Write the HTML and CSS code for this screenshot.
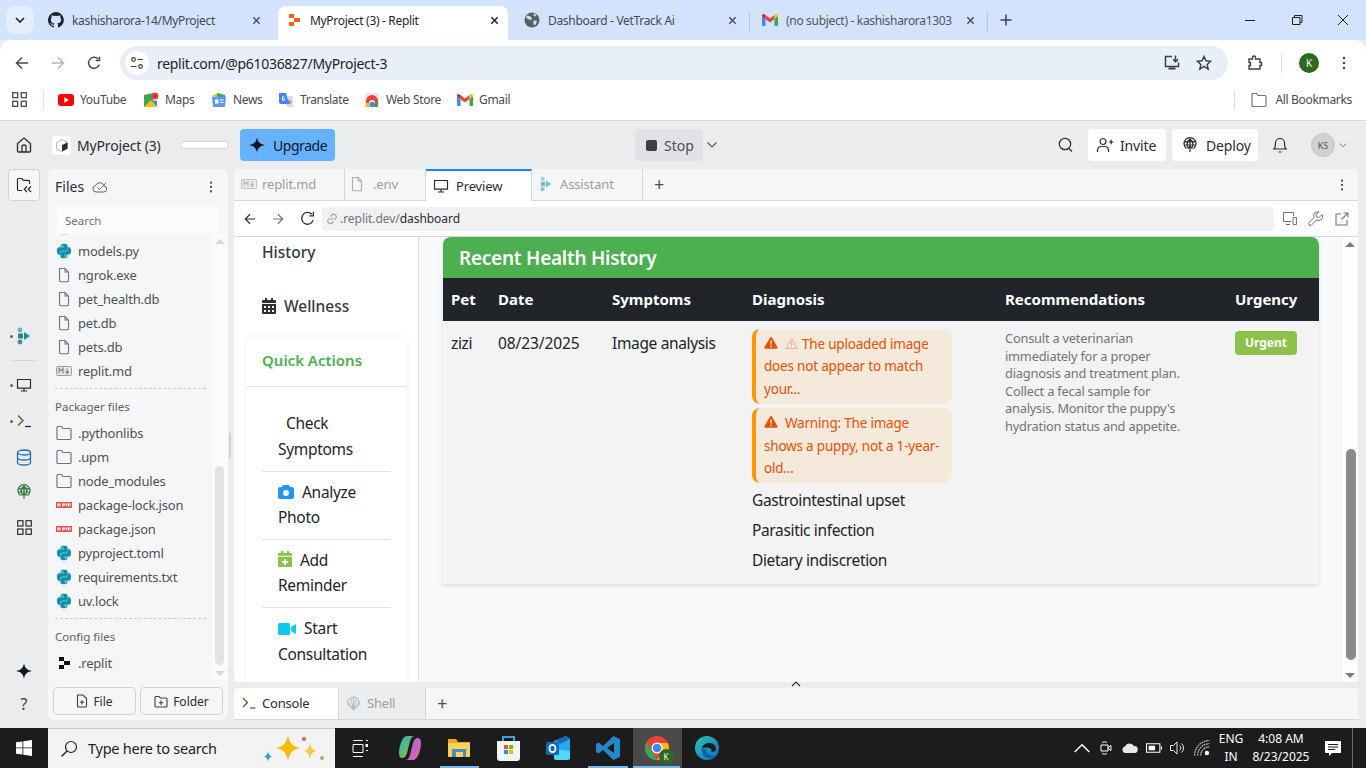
FILE: index.html
```html
<!DOCTYPE html>
<html lang="en">
<head>
    <meta charset="UTF-8">
    <title>MyProject (3) - Replit</title>
    <link rel="stylesheet" href="styles.css">
</head>
<body>
    <svg class="defs" width="0" height="0">
        <symbol id="py" viewBox="0 0 24 24">
            <path fill="#0f8fae" d="M11.900 1C6.600 1 7 3.300 7 3.300V5.700h5v.8H5S1.500 6.100 1.500 11.900s3.100 5.600 3.100 5.600h1.900v-2.700s-.1-3.100 3-3.100h5s2.900 0 2.900-2.800V4S18 1 11.900 1zM9.200 2.600a.9.9 0 1 1 0 1.800.9.9 0 0 1 0-1.800z"/>
            <path fill="#0f8fae" transform="rotate(180 12 12)" d="M11.900 1C6.600 1 7 3.300 7 3.300V5.700h5v.8H5S1.500 6.100 1.500 11.900s3.100 5.600 3.100 5.600h1.900v-2.700s-.1-3.100 3-3.100h5s2.900 0 2.900-2.800V4S18 1 11.900 1zM9.200 2.600a.9.9 0 1 1 0 1.800.9.9 0 0 1 0-1.800z"/>
        </symbol>
        <symbol id="file" viewBox="0 0 16 16">
            <path fill="none" stroke="#70757c" stroke-width="1.100" d="M3.500 1.500h5.500l3.500 3.500v8.500a1.200 1.200 0 0 1-1.200 1.200H4.700a1.200 1.200 0 0 1-1.200-1.200zM9 1.500V5h3.500"/>
        </symbol>
        <symbol id="folder" viewBox="0 0 16 16">
            <path fill="none" stroke="#70757c" stroke-width="1.200" d="M1 2.500a1 1 0 0 1 1-1h3.500l1.500 2h7a1 1 0 0 1 1 1v9a1 1 0 0 1-1 1H2a1 1 0 0 1-1-1z"/>
        </symbol>
        <symbol id="npm" viewBox="0 0 16 7">
            <rect width="16" height="6" y=".5" fill="#e2504f"/>
            <path fill="#fff" d="M1.500 2h3v3h-1V3h-.8v2H1.500zM6 2h3.200v2.200H7.200V5H6zm1.200 1v.4H8V3zM10 2h4.600v3h-1V3h-.7v2h-.9V3h-.8v2H10z"/>
        </symbol>
        <symbol id="md" viewBox="0 0 16 10">
            <rect x=".5" y=".5" width="15" height="9" rx="1" fill="#e8e9ea" stroke="#9a9ea3"/>
            <path fill="none" stroke="#85898e" stroke-width="1.200" d="M3 7.500v-5l2 2.400 2-2.400v5M11.200 2.500v4.500M9.500 5.500l1.700 2 1.700-2"/>
        </symbol>
        <symbol id="agent" viewBox="0 0 14 18">
            <circle cx="3" cy="3" r="2.400" fill="#5fb3c9"/>
            <circle cx="3" cy="15" r="2.400" fill="#3f8ea6"/>
            <rect x="1" y="6.500" width="5" height="5" fill="#2e7f99"/>
            <path d="M7 5l6 4-6 4z" fill="#0f8fae"/>
        </symbol>
        <symbol id="monitor" viewBox="0 0 16 16">
            <path fill="none" stroke="#2a2d33" stroke-width="1.200" d="M1.500 2.500h13v8.600h-13zM8 11.200v2.600M4.800 14h6.400"/>
        </symbol>
        <symbol id="globe" viewBox="0 0 16 16">
            <path fill="none" stroke="currentColor" stroke-width="1.200" d="M4.500 11.500a6 6 0 1 1 7 0M2 8h12M2.800 4.800h10.400M8 2v13M8 2c-4 3-3 7-1.500 9.500M8 2c4 3 3 7 1.500 9.500M5.600 11.600L8 9.200l2.400 2.400"/>
        </symbol>
        <symbol id="star4" viewBox="0 0 16 16">
            <path fill="currentColor" d="M8 0c.6 4.600 2.400 7 8 8-5.600 1-7.400 3.400-8 8-.6-4.600-2.400-7-8-8 5.600-1 7.400-3.400 8-8z"/>
        </symbol>
        <symbol id="close" viewBox="0 0 10 10">
            <path fill="none" stroke="currentColor" stroke-width="1.500" d="M1.500 1.500l7 7M8.500 1.500l-7 7"/>
        </symbol>
        <symbol id="warn" viewBox="0 0 16 16">
            <path fill="#e65100" d="M8 1.200c.5 0 .9.300 1.100.7l6.300 11c.4.700-.1 1.700-1 1.700H1.600c-.9 0-1.400-1-1-1.700l6.300-11c.2-.4.600-.7 1.100-.7z"/>
            <path fill="#f5e9dc" d="M7.100 5h1.800l-.3 5H7.400zM7.100 11h1.800v1.800H7.100z"/>
        </symbol>
        <symbol id="warn-line" viewBox="0 0 16 16">
            <path fill="none" stroke="#ecab84" stroke-width="1.200" d="M8 2l6.800 12H1.200zM8 6v4.500M8 11.500v1.500"/>
        </symbol>
        <symbol id="kebab" viewBox="0 0 4 16">
            <circle cx="2" cy="3" r="1.300" fill="currentColor"/>
            <circle cx="2" cy="8" r="1.300" fill="currentColor"/>
            <circle cx="2" cy="13" r="1.300" fill="currentColor"/>
        </symbol>
    </svg>

    <!-- browser -->
    <div class="tabstrip">
        <div class="tab-list-btn"><svg width="10" height="6" viewBox="0 0 10 6"><path d="M1 1l4 4 4-4" fill="none" stroke="#1f1f1f" stroke-width="1.600"/></svg></div>
        <div class="tab">
            <svg class="tab-icon" viewBox="0 0 16 16"><path fill="#1f2328" d="M8 0a8 8 0 0 0-2.500 15.600c.4.100.5-.2.500-.4v-1.400c-2.200.5-2.700-1-2.700-1-.4-.9-.9-1.200-.9-1.200-.7-.5.100-.5.100-.5.800.1 1.200.8 1.200.8.700 1.200 1.900.9 2.300.7.100-.5.300-.9.500-1.100-1.800-.2-3.600-.9-3.600-4 0-.9.300-1.600.8-2.100-.1-.2-.4-1 .1-2.100 0 0 .7-.2 2.200.8a7.600 7.600 0 0 1 4 0c1.500-1 2.200-.8 2.200-.8.400 1.100.2 1.900.1 2.100.5.600.8 1.300.8 2.100 0 3.100-1.900 3.700-3.700 3.900.3.300.6.800.6 1.500v2.200c0 .2.100.5.600.4A8 8 0 0 0 8 0z"/></svg>
            <span class="tab-title">kashisharora-14/MyProject</span>
            <svg class="tab-close" viewBox="0 0 10 10"><use href="#close"/></svg>
        </div>
        <div class="tab tab--active">
            <svg class="tab-icon" viewBox="0 0 16 16"><path fill="#f26207" d="M3 2h5v4H3zM8 6h6v4H8zM3 10h5v4H3z"/></svg>
            <span class="tab-title">MyProject (3) - Replit</span>
            <svg class="tab-close tab-close--dark" viewBox="0 0 10 10"><use href="#close"/></svg>
        </div>
        <div class="tab tab--sep">
            <svg class="tab-icon" viewBox="0 0 16 16"><circle cx="8" cy="8" r="7.500" fill="#5a6068"/><path fill="#d3e3fd" d="M3 3.500l3.500 1 1.500 2-1.500 1.500-1.500-.5-3-2zM9.500 8.500l3.500.5-1.500 4-2-.5zM10 1.500l2.500 1.500-1.500 1.500-1.500-1z"/></svg>
            <span class="tab-title">Dashboard - VetTrack Ai</span>
            <svg class="tab-close" viewBox="0 0 10 10"><use href="#close"/></svg>
        </div>
        <div class="tab tab--sep">
            <svg class="tab-icon" viewBox="0 0 16 12"><path fill="#4285f4" d="M0 2v9a1 1 0 0 0 1 1h2.500V5z"/><path fill="#34a853" d="M12.500 5v7H15a1 1 0 0 0 1-1V2z"/><path fill="#ea4335" d="M3.500 5L8 8.400 12.500 5V1L8 4.400 3.500 1z"/><path fill="#c5221f" d="M0 2l3.500 3V1L2 .2C1.100-.3 0 .5 0 2z"/><path fill="#fbbc04" d="M16 2l-3.500 3V1L14 .2c.9-.5 2 .3 2 1.800z"/></svg>
            <span class="tab-title tab-title--fade">(no subject) - kashisharora1303</span>
            <svg class="tab-close" viewBox="0 0 10 10"><use href="#close"/></svg>
        </div>
        <div class="tab-plus">
            <svg width="12" height="12" viewBox="0 0 12 12"><path d="M6 .5v11M.5 6h11" stroke="#3c4043" stroke-width="1.500"/></svg>
        </div>
        <div class="win-btns">
            <svg width="46" height="12" viewBox="0 0 46 12"><path d="M17 6.500h10" stroke="#1f1f1f"/></svg>
            <svg width="46" height="12" viewBox="0 0 46 12"><path d="M18.500 3.500h7.500v7h-7.500zM20.500 3.500v-2h7.500v7h-2" fill="none" stroke="#1f1f1f"/></svg>
            <svg width="46" height="12" viewBox="0 0 46 12"><path d="M18 1l10 10M28 1L18 11" stroke="#1f1f1f"/></svg>
        </div>
    </div>

    <div class="toolbar">
        <div class="nav-btn nav-btn--first"><svg width="14" height="14" viewBox="0 0 14 14"><path d="M13 7H2M7 1.500L1.500 7 7 12.500" fill="none" stroke="#474a4f" stroke-width="1.500"/></svg></div>
        <div class="nav-btn"><svg width="14" height="14" viewBox="0 0 14 14"><path d="M1 7h11M7 1.500L12.500 7 7 12.500" fill="none" stroke="#b4b6ba" stroke-width="1.500"/></svg></div>
        <div class="nav-btn"><svg width="14" height="14" viewBox="0 0 14 14"><path d="M12.300 8.500A5.500 5.500 0 1 1 11 3M12.500 .8v3.700H8.800" fill="none" stroke="#474a4f" stroke-width="1.500"/></svg></div>
        <div class="omnibox">
            <div class="site-btn"><svg width="14" height="14" viewBox="0 0 14 14"><g fill="none" stroke="#3c4043" stroke-width="1.200"><circle cx="3.500" cy="3.500" r="1.800"/><path d="M7.500 3.500h5.500M1 10.500h5.500"/><circle cx="10.500" cy="10.500" r="1.800"/></g></svg></div>
            <span class="omni-url">replit.com/@p61036827/MyProject-3</span>
            <svg class="omni-icon" width="18" height="18" viewBox="0 0 18 18"><path d="M9 2.500H2.500v10h13v-4M12.500 1.500v6M10 5.300l2.500 2.500L15 5.300" fill="none" stroke="#3c4043" stroke-width="1.500"/><path d="M5.500 14.500h7" stroke="#3c4043" stroke-width="2"/></svg>
            <svg class="omni-icon" width="16" height="16" viewBox="0 0 16 16"><path d="M8 1.500l2 4.300 4.700.5-3.500 3.200 1 4.600L8 11.300l-4.200 2.800 1-4.600L1.300 6.300 6 5.800z" fill="none" stroke="#3c4043" stroke-width="1.400"/></svg>
        </div>
        <svg class="ext-icon" width="16" height="16" viewBox="0 0 16 16"><path d="M2 4h3.500V2.500a1.500 1.500 0 0 1 3 0V4H13v3.500h1.500v3H13V14H2v-3.500h1.500v-3H2z" fill="none" stroke="#3c4043" stroke-width="1.400"/></svg>
        <div class="bar-sep"></div>
        <div class="chrome-avatar">K</div>
        <svg class="chrome-menu" width="4" height="16"><use href="#kebab"/></svg>
    </div>

    <div class="bookmarks">
        <svg class="apps" width="15" height="15" viewBox="0 0 15 15"><g fill="none" stroke="#474a4f" stroke-width="1.300"><rect x=".7" y=".7" width="5" height="5"/><rect x="9.300" y=".7" width="5" height="5"/><rect x=".7" y="9.300" width="5" height="5"/><rect x="9.300" y="9.300" width="5" height="5"/></g></svg>
        <div class="bm-sep"></div>
        <div class="bm bm--yt"><svg viewBox="0 0 16 12"><rect width="16" height="12" rx="3" fill="#f00"/><path d="M6.300 3.300L11 6l-4.700 2.700z" fill="#fff"/></svg>YouTube</div>
        <div class="bm bm--maps"><svg viewBox="0 0 16 16"><path fill="#34a853" d="M1 3l9-2v8L1 15z"/><path fill="#fbbc04" d="M1 15l7-7 6 7z"/><path fill="#4285f4" d="M8 8l6 7V9z"/><circle cx="12" cy="4" r="3.500" fill="#ea4335"/><circle cx="12" cy="4" r="1.200" fill="#a52714"/></svg>Maps</div>
        <div class="bm bm--news"><svg viewBox="0 0 16 16"><path fill="#fbbc04" d="M2 3l6-2 2 3H2z"/><path fill="#34a853" d="M6 1l8 2v2H6z"/><path fill="#5e97f6" d="M1 4.500h14l-1 10.500H2z"/><path fill="#fff" d="M4 7.500h3.500v4H4zM9 7.500h3.500v1H9zM9 10h3.500v1H9z"/></svg>News</div>
        <div class="bm bm--tr"><svg viewBox="0 0 16 16"><path fill="#dadce0" d="M7 4h8v11H9z"/><path fill="#8a8e94" d="M11 7l1 2 2 .2-1.500 1.300.5 2-2-1-2 1 .5-2-1.500-1.300 2-.2z"/><path fill="#4285f4" d="M1 1h7l3 11H3a2 2 0 0 1-2-2z"/><path fill="#fff" d="M4 4.500h2.500v1H5v2h1.200v-1H7v2H4z"/></svg>Translate</div>
        <div class="bm bm--ws"><svg viewBox="0 0 16 16"><path fill="#e8e8e8" d="M1 1h14v14H1z"/><path fill="#ea4335" d="M2 9a6 6 0 0 1 12 0v2h-3a3 3 0 0 0-6 0H2z"/><path fill="#fbbc04" d="M2 11h3a3 3 0 0 0 1 2l-1 2H2z"/><path fill="#34a853" d="M11 11h3v4H5z"/><circle cx="8" cy="12" r="2.300" fill="#4285f4"/></svg>Web Store</div>
        <div class="bm"><svg viewBox="0 0 16 12"><path fill="#4285f4" d="M0 2v9a1 1 0 0 0 1 1h2.500V5z"/><path fill="#34a853" d="M12.500 5v7H15a1 1 0 0 0 1-1V2z"/><path fill="#ea4335" d="M3.500 5L8 8.400 12.500 5V1L8 4.400 3.500 1z"/><path fill="#c5221f" d="M0 2l3.500 3V1L2 .2C1.100-.3 0 .5 0 2z"/><path fill="#fbbc04" d="M16 2l-3.500 3V1L14 .2c.9-.5 2 .3 2 1.800z"/></svg>Gmail</div>
        <div class="bm-sep bm-sep--right"></div>
        <div class="bm bm--all"><svg viewBox="0 0 16 16"><use href="#folder"/></svg>All Bookmarks</div>
    </div>

    <!-- replit -->
    <div class="ide">
        <header class="ide-top">
            <svg class="home" width="18" height="18" viewBox="0 0 18 18"><path d="M2.500 7.500L9 2l6.500 5.500V15a1 1 0 0 1-1 1h-11a1 1 0 0 1-1-1zM7 16v-5a2 2 0 0 1 4 0v5" fill="none" stroke="#2a2d33" stroke-width="1.300"/></svg>
            <div class="proj-icon"><svg width="12" height="13" viewBox="0 0 12 13"><path d="M6 .5l5.500 3v6L6 12.500l-5.500-3v-6z" fill="#fff" stroke="#bbb"/><path d="M6 6l5.500-2.500v6L6 12.500z" fill="#2a2d33"/></svg></div>
            <span class="proj-name">MyProject (3)</span>
            <div class="proj-pill"></div>
            <div class="upgrade"><svg width="16" height="16"><use href="#star4"/></svg>Upgrade</div>
            <div class="stop"><i class="stop-square"></i>Stop</div>
            <svg class="stop-caret" width="10" height="6" viewBox="0 0 10 6"><path d="M.5.500L5 5 9.500.500" fill="none" stroke="#53575e" stroke-width="1.100"/></svg>
            <svg class="search-ic" width="16" height="16" viewBox="0 0 16 16"><circle cx="7" cy="7" r="5.700" fill="none" stroke="#2a2d33" stroke-width="1.200"/><path d="M11 11.500l3 3" stroke="#2a2d33" stroke-width="1.200"/></svg>
            <div class="top-btn top-btn--invite"><svg width="18" height="16" viewBox="0 0 18 16"><g fill="none" stroke="#2a2d33" stroke-width="1.200"><circle cx="7" cy="4.500" r="3"/><path d="M1.500 15v-2a4 4 0 0 1 4-3.500h3a4 4 0 0 1 4 3.500v2M13 5h4.500M15.200 2.800v4.500"/></g></svg>Invite</div>
            <div class="top-btn top-btn--deploy"><svg width="16" height="16"><use href="#globe"/></svg>Deploy</div>
            <svg class="bell" width="16" height="18" viewBox="0 0 16 18"><path d="M2 13c1.500-1.500 1.500-3 1.500-6a4.500 4.500 0 0 1 9 0c0 3 0 4.500 1.500 6zM6.500 16h3" fill="none" stroke="#2a2d33" stroke-width="1.200"/></svg>
            <div class="user-avatar">KS</div>
            <svg class="user-caret" width="8" height="5" viewBox="0 0 8 5"><path d="M.5.500L4 4 7.500.500" fill="none" stroke="#8a8e94"/></svg>
        </header>

        <div class="ide-main">
            <nav class="rail">
                <div class="rail-files"><svg width="17" height="16" viewBox="0 0 17 16"><path d="M6 13.500H2.500a1 1 0 0 1-1-1v-10a1 1 0 0 1 1-1h3.300l1.500 1.800h5.200a1 1 0 0 1 1 1V7M11 9.500l-2.800 2.800 2.800 2.700M15 9.500l-2.800 2.800 2.800 2.700" fill="none" stroke="#2a2d33" stroke-width="1.200"/></svg></div>
                <div class="rail-item rail-item--first"><i class="rail-dot"></i><svg width="14" height="18"><use href="#agent"/></svg></div>
                <div class="rail-sep"></div>
                <div class="rail-item"><i class="rail-dot"></i><svg width="16" height="16"><use href="#monitor"/></svg></div>
                <div class="rail-item"><i class="rail-dot"></i><svg width="16" height="14" viewBox="0 0 16 14"><path d="M2 1.500L7 6.500 2 11.500" fill="none" stroke="#6b5320" stroke-width="1.300"/><path d="M9 12.500h6" stroke="#2a2d33" stroke-width="1.300"/></svg></div>
                <div class="rail-item"><svg width="16" height="17" viewBox="0 0 16 17"><g fill="none" stroke="#1f6fb2" stroke-width="1.300"><ellipse cx="8" cy="3.500" rx="6.500" ry="2.500"/><path d="M1.500 3.500v10c0 1.400 2.900 2.500 6.500 2.500s6.500-1.100 6.500-2.500v-10M1.500 8.500c0 1.400 2.900 2.500 6.500 2.500s6.500-1.100 6.500-2.500"/></g></svg></div>
                <div class="rail-item rail-item--deploy"><svg width="16" height="16"><use href="#globe"/></svg></div>
                <div class="rail-item rail-item--grid"><svg width="15" height="15" viewBox="0 0 15 15"><g fill="none" stroke="#2a2d33" stroke-width="1.200"><rect x=".7" y=".7" width="5.300" height="5.300"/><rect x="9" y=".7" width="5.300" height="5.300"/><rect x=".7" y="9" width="5.300" height="5.300"/><rect x="9" y="9" width="5.300" height="5.300"/></g></svg></div>
                <div class="rail-bottom">
                    <div class="rail-star"><svg width="16" height="16"><use href="#star4"/></svg></div>
                    <div class="rail-help">?</div>
                </div>
            </nav>

            <aside class="files">
                <div class="files-head">
                    <span class="files-title">Files</span>
                    <svg width="15" height="12" viewBox="0 0 15 12"><path d="M4 11a3.300 3.300 0 0 1-.5-6.500A4.500 4.500 0 0 1 12 5a3 3 0 0 1-.5 6zM5.500 6.500L7.500 8.500 14 2" fill="none" stroke="#5d6168"/></svg>
                    <svg class="files-kebab" width="4" height="14" viewBox="0 0 4 16"><use href="#kebab"/></svg>
                </div>
                <div class="files-search">Search</div>
                <div class="files-body">
                    <div class="tree">
                        <div class="row"><svg><use href="#py"/></svg></div>
                        <div class="row"><svg><use href="#py"/></svg>models.py</div>
                        <div class="row"><svg><use href="#file"/></svg>ngrok.exe</div>
                        <div class="row"><svg><use href="#file"/></svg>pet_health.db</div>
                        <div class="row"><svg><use href="#file"/></svg>pet.db</div>
                        <div class="row"><svg><use href="#file"/></svg>pets.db</div>
                        <div class="row"><svg><use href="#md"/></svg>replit.md</div>
                        <div class="tree-label">Packager files</div>
                        <div class="row"><svg><use href="#folder"/></svg>.pythonlibs</div>
                        <div class="row"><svg><use href="#folder"/></svg>.upm</div>
                        <div class="row"><svg><use href="#folder"/></svg>node_modules</div>
                        <div class="row"><svg><use href="#npm"/></svg>package-lock.json</div>
                        <div class="row"><svg><use href="#npm"/></svg>package.json</div>
                        <div class="row"><svg><use href="#py"/></svg>pyproject.toml</div>
                        <div class="row"><svg><use href="#py"/></svg>requirements.txt</div>
                        <div class="row"><svg><use href="#py"/></svg>uv.lock</div>
                        <div class="tree-label">Config files</div>
                        <div class="row"><svg viewBox="0 0 16 16"><path fill="#111" d="M3 2h5v4H3zM8 6h6v4H8zM3 10h5v4H3z"/></svg>.replit</div>
                    </div>
                    <div class="tree-scroll">
                        <i class="sb-up"></i>
                        <i class="sb-thumb"></i>
                        <i class="sb-down"></i>
                    </div>
                </div>
                <div class="files-actions">
                    <div class="file-btn"><svg width="12" height="14" viewBox="0 0 12 14"><path d="M1.500 1h5.500l3.500 3.500V12a1 1 0 0 1-1 1h-7a1 1 0 0 1-1-1zM6 6v4.500M3.800 8.200h4.400" fill="none" stroke="#3a3d43" stroke-width="1.100"/></svg>File</div>
                    <div class="file-btn"><svg width="14" height="13" viewBox="0 0 14 13"><path d="M1 2.500a1 1 0 0 1 1-1h3l1.300 1.500H12a1 1 0 0 1 1 1V11a1 1 0 0 1-1 1H2a1 1 0 0 1-1-1zM7 5.500v4.500M4.800 7.700h4.400" fill="none" stroke="#3a3d43" stroke-width="1.100"/></svg>Folder</div>
                </div>
            </aside>

            <div class="handle"></div>

            <div class="work">
                <section class="pane">
                    <div class="pane-tabs">
                        <div class="ptab ptab--md"><svg width="16" height="10"><use href="#md"/></svg>replit.md</div>
                        <div class="ptab ptab--env"><svg width="16" height="16"><use href="#file"/></svg>.env</div>
                        <div class="ptab ptab--active"><svg width="16" height="16"><use href="#monitor"/></svg>Preview</div>
                        <div class="ptab ptab--agent"><svg width="12" height="16"><use href="#agent"/></svg>Assistant</div>
                        <div class="ptab-plus">+</div>
                        <svg class="pane-kebab" width="4" height="14" viewBox="0 0 4 16"><use href="#kebab"/></svg>
                    </div>
                    <div class="addr">
                        <svg class="addr-btn" width="12" height="12" viewBox="0 0 14 14"><path d="M13 7H2M7 1.500L1.500 7 7 12.500" fill="none" stroke="#2a2d33" stroke-width="1.400"/></svg>
                        <svg class="addr-btn addr-btn--gap" width="12" height="12" viewBox="0 0 14 14"><path d="M1 7h11M7 1.500L12.500 7 7 12.500" fill="none" stroke="#70757c" stroke-width="1.400"/></svg>
                        <svg class="addr-btn addr-btn--gap" width="15" height="15" viewBox="0 0 14 14"><path d="M12.300 8.500A5.500 5.500 0 1 1 11 3M12.500 .8v3.700H8.800" fill="none" stroke="#2a2d33" stroke-width="1.200"/></svg>
                        <div class="addr-field">
                            <svg width="12" height="12" viewBox="0 0 12 12"><path d="M5 7l2-2M4.500 3.500l1.300-1.300a2.500 2.500 0 0 1 3.800 3.300L8.300 7M7.500 8.500L6.200 9.800a2.500 2.500 0 0 1-3.800-3.300L3.700 5" fill="none" stroke="#9a9ea3" stroke-width="1.100"/></svg>
                            <span class="addr-host">.replit.dev/</span><span class="addr-path">dashboard</span>
                        </div>
                        <svg class="addr-tool addr-tool--a" width="16" height="15" viewBox="0 0 16 15"><path d="M9 10.500H1.500v-9h10V5M4 13.500h4M11 6.500h3.500v7H11z" fill="none" stroke="#70757c"/></svg>
                        <svg class="addr-tool addr-tool--b" width="15" height="15" viewBox="0 0 15 15"><path d="M14 3.500l-3 3-2.500-.5-.5-2.500 3-2.500A4 4 0 0 0 6 6.500L1 11.500a1.500 1.500 0 0 0 2.500 2.500l5-5A4 4 0 0 0 14 3.500z" fill="none" stroke="#70757c"/></svg>
                        <svg class="addr-tool addr-tool--c" width="14" height="14" viewBox="0 0 14 14"><path d="M6 2H1v11h11V8M8.500 1H13v4.500M13 1L6.500 7.500" fill="none" stroke="#70757c" stroke-width="1.100"/></svg>
                    </div>

                    <div class="preview">
                        <div class="pv-side">
                            <div class="pv-link">History</div>
                            <div class="pv-link pv-link--well">
                                <svg width="14" height="16" viewBox="0 0 14 16"><path fill="#2b3035" d="M3 0h2v2h4V0h2v2h2a1 1 0 0 1 1 1v2H0V3a1 1 0 0 1 1-1h2zM0 6h14v9a1 1 0 0 1-1 1H1a1 1 0 0 1-1-1zm2 2v2h2V8zm4 0v2h2V8zm4 0v2h2V8zm-8 4v2h2v-2zm4 0v2h2v-2zm4 0v2h2v-2z"/></svg>
                                Wellness
                            </div>
                            <div class="qa">
                                <div class="qa-head">Quick Actions</div>
                                <div class="qa-body">
                                    <div class="qa-item"><span class="qa-blank"></span>Check Symptoms</div>
                                    <div class="qa-item"><svg class="qa-ic" width="16" height="14" viewBox="0 0 16 14"><path fill="#2196f3" d="M5 0h6l1.200 2H14a2 2 0 0 1 2 2v8a2 2 0 0 1-2 2H2a2 2 0 0 1-2-2V4a2 2 0 0 1 2-2h1.800z"/><circle cx="8" cy="8" r="3" fill="#fff"/></svg>Analyze Photo</div>
                                    <div class="qa-item"><svg class="qa-ic" width="14" height="16" viewBox="0 0 14 16"><path fill="#8bc34a" d="M3 0h2v2h4V0h2v2h2a1 1 0 0 1 1 1v12a1 1 0 0 1-1 1H1a1 1 0 0 1-1-1V3a1 1 0 0 1 1-1h2z"/><path fill="#fff" d="M0 4.800h14v1H0zM6 8h2v2h2v2H8v2H6v-2H4v-2h2z"/></svg>Add Reminder</div>
                                    <div class="qa-item"><svg class="qa-ic" width="18" height="12" viewBox="0 0 18 12"><rect width="12" height="12" rx="1.500" fill="#0dcaf0"/><path fill="#0dcaf0" d="M13 4l5-3v10l-5-3z"/></svg>Start Consultation</div>
                                </div>
                            </div>
                        </div>

                        <div class="pv-main">
                            <div class="card">
                                <div class="card-head">Recent Health History</div>
                                <table class="hist">
                                    <thead>
                                        <tr>
                                            <th class="col-pet">Pet</th>
                                            <th class="col-date">Date</th>
                                            <th class="col-sym">Symptoms</th>
                                            <th class="col-diag">Diagnosis</th>
                                            <th class="col-rec">Recommendations</th>
                                            <th class="col-urg">Urgency</th>
                                        </tr>
                                    </thead>
                                    <tbody>
                                        <tr>
                                            <td class="plain">zizi</td>
                                            <td class="plain plain--date">08/23/2025</td>
                                            <td class="plain">Image analysis</td>
                                            <td>
                                                <div class="alert"><svg class="alert-ic" width="14" height="14"><use href="#warn"/></svg><svg class="alert-ic alert-ic--line" width="13" height="13"><use href="#warn-line"/></svg>The uploaded image does not appear to match your...</div>
                                                <div class="alert"><svg class="alert-ic" width="14" height="14"><use href="#warn"/></svg>Warning: The image shows a puppy, not a 1-year-old...</div>
                                                <div class="diag diag--first">Gastrointestinal upset</div>
                                                <div class="diag">Parasitic infection</div>
                                                <div class="diag">Dietary indiscretion</div>
                                            </td>
                                            <td class="rec">Consult a veterinarian immediately for a proper diagnosis and treatment plan. Collect a fecal sample for analysis. Monitor the puppy's hydration status and appetite.</td>
                                            <td><span class="badge">Urgent</span></td>
                                        </tr>
                                    </tbody>
                                </table>
                            </div>
                        </div>

                        <div class="pv-scroll">
                            <i class="sb-up sb-up--dark"></i>
                            <i class="pv-thumb"></i>
                            <i class="sb-down sb-down--dark"></i>
                        </div>
                    </div>
                </section>

                <section class="console">
                    <div class="ctab ctab--active"><svg width="14" height="12" viewBox="0 0 14 12"><path d="M1 1l4.500 4.500L1 10" fill="none" stroke="#5d4a1e" stroke-width="1.200"/><path d="M8 11h5.500" stroke="#2a2d33" stroke-width="1.200"/></svg>Console</div>
                    <div class="ctab ctab--shell"><svg width="15" height="15" viewBox="0 0 15 15"><path d="M7.500 14L2 9a6 6 0 0 1 5.500-8A6 6 0 0 1 13 9zM7.500 14V1M7.500 14L4.500 2M7.500 14l3-12M7.500 14L2 6M7.500 14l5.500-8" fill="none" stroke="#a9bccd"/></svg>Shell</div>
                    <div class="ptab-plus">+</div>
                </section>
                <svg class="pane-caret" width="10" height="6" viewBox="0 0 10 6"><path d="M1 5l4-4 4 4" fill="none" stroke="#2a2d33" stroke-width="1.100"/></svg>
            </div>
        </div>
    </div>

    <!-- windows -->
    <footer class="taskbar">
        <div class="start"><svg width="16" height="16" viewBox="0 0 16 16"><path fill="#fff" d="M0 2.300l6.500-.9v6.100H0zM7.300 1.300L16 0v7.500H7.300zM0 8.300h6.500v6.200L0 13.700zM7.300 8.300H16V16l-8.700-1.200z"/></svg></div>
        <div class="tb-search">
            <svg width="18" height="18" viewBox="0 0 18 18"><circle cx="11" cy="7" r="5.500" fill="none" stroke="#222" stroke-width="1.200"/><path d="M7 11l-5.500 5.500" stroke="#222" stroke-width="1.400"/></svg>
            <span class="tb-search-text">Type here to search</span>
            <svg class="tb-sparkle" width="64" height="32" viewBox="0 0 64 32">
                <path fill="#ffb900" d="M26 2c1.500 8 3.500 11 12 13-8.500 2-10.500 5-12 13-1.500-8-3.500-11-12-13 8.500-2 10.500-5 12-13z"/>
                <path fill="#ffc83d" d="M48 10c.7 4 1.800 6.500 6 8-4.200 1.500-5.300 4-6 8-.7-4-1.800-6.500-6-8 4.200-1.500 5.300-4 6-8z"/>
                <path fill="#2aa0f5" d="M6 18c.5 3 1.200 4.500 4 5.500-2.800 1-3.500 2.500-4 5.500-.5-3-1.200-4.500-4-5.500 2.800-1 3.500-2.500 4-5.500z"/>
                <circle cx="42" cy="6" r="2" fill="#e8623c"/>
                <circle cx="60" cy="25" r="2" fill="#8bc34a"/>
            </svg>
        </div>
        <div class="tb-view"><svg width="16" height="17" viewBox="0 0 16 17"><path d="M1 .500h10M1 16.500h10M1 4.500h10v8H1zM14 .5h2M14 10.500h2" fill="none" stroke="#fff"/><path d="M13.500 4h3v3h-3z" fill="#fff"/></svg></div>
        <div class="tb-app">
            <svg width="22" height="26" viewBox="0 0 22 26"><defs><linearGradient id="cop" x1="0" y1="0" x2="1" y2="1"><stop offset="0" stop-color="#35a8f0"/><stop offset=".55" stop-color="#5fc05a"/><stop offset="1" stop-color="#f6c13c"/></linearGradient><linearGradient id="cop2" x1="0" y1="0" x2="1" y2="1"><stop offset="0" stop-color="#8a6df0"/><stop offset="1" stop-color="#f2609b"/></linearGradient></defs><path fill="url(#cop)" d="M8 1h8c-3 0-4 2-5 5L8 18c-.8 3-2.500 5-5 5-2 0-3-2-3-5 0-6 3-17 8-17z"/><path fill="url(#cop2)" d="M14 25H6c3 0 4-2 5-5l3-12c.8-3 2.500-5 5-5 2 0 3 2 3 5 0 6-3 17-8 17z"/></svg>
        </div>
        <div class="tb-app tb-app--open">
            <svg width="22" height="20" viewBox="0 0 22 20"><path fill="#e8a91e" d="M0 1h8l2 3h12v4H0z"/><path fill="#f9d25d" d="M0 5h22v13a1 1 0 0 1-1 1H1a1 1 0 0 1-1-1z"/><path fill="#2f87c9" d="M4 11h14v8h-3v-5H8v5H4z" opacity=".9"/></svg>
        </div>
        <div class="tb-app">
            <svg width="23" height="26" viewBox="0 0 23 26"><path fill="none" stroke="#2ca7e0" stroke-width="2" d="M6 7V2h11v5"/><path fill="#f5f5f5" d="M0 6h23v17a3 3 0 0 1-3 3H3a3 3 0 0 1-3-3z"/><path fill="#f25022" d="M7 10h4v4H7z"/><path fill="#7fba00" d="M12 10h4v4h-4z"/><path fill="#00a4ef" d="M7 15h4v4H7z"/><path fill="#ffb900" d="M12 15h4v4h-4z"/></svg>
        </div>
        <div class="tb-app">
            <svg width="24" height="24" viewBox="0 0 24 24"><path fill="#28a8ea" d="M8 5l12-5 4 3v12H8z"/><path fill="#0f6cbd" d="M10 4l10-4 4 3-10 5z"/><path fill="#50d9ff" d="M8 13l16 2v7a2 2 0 0 1-2 2H10a2 2 0 0 1-2-2z"/><rect y="6" width="13" height="13" rx="1.500" fill="#0f6cbd"/><ellipse cx="6.500" cy="12.500" rx="3" ry="3.700" fill="none" stroke="#fff" stroke-width="1.800"/></svg>
        </div>
        <div class="tb-app tb-app--open">
            <svg width="24" height="24" viewBox="0 0 24 24"><path fill="#2489ca" fill-rule="evenodd" d="M17.500 0L24 3.200v17.600L17.500 24 7 14l-4.500 3.500L0 16V8l2.500-1.500L7 10zM18 7l-7 5 7 5z"/></svg>
        </div>
        <div class="tb-app tb-app--active">
            <svg width="24" height="24" viewBox="0 0 24 24"><circle cx="12" cy="12" r="12" fill="#ea4335"/><path fill="#34a853" d="M12 24a12 12 0 0 1-10.400-18L12 24z"/><path fill="#fbbc04" d="M12 24l5.200-9L12 7h10.900A12 12 0 0 1 12 24z"/><circle cx="12" cy="12" r="5.500" fill="#fff"/><circle cx="12" cy="12" r="4.300" fill="#4285f4"/></svg>
            <span class="chrome-badge">K</span>
        </div>
        <div class="tb-app">
            <svg width="24" height="24" viewBox="0 0 24 24"><defs><linearGradient id="edge" x1="0" y1="0" x2="1" y2="1"><stop offset="0" stop-color="#2bc6b5"/><stop offset="1" stop-color="#0a6cc2"/></linearGradient></defs><circle cx="12" cy="12" r="12" fill="url(#edge)"/><path fill="#1c1c1c" d="M7 13c0-4 4-6 7-6 4 0 7 2 7 6 0 2-2 3-5 3 1-1 1-2 0-3-2-2-7-2-9 0z"/><path fill="#0a5fa8" d="M7 13c-1 5 3 9 8 9 4 0 6-2 7-3-3 1-8 1-10-2-1-1-1-2 0-3 0 0-3-1-5-1z"/></svg>
        </div>
        <div class="tray">
            <svg class="tray-ic" width="12" height="7" viewBox="0 0 12 7"><path d="M.500 6.500L6 1l5.500 5.500" fill="none" stroke="#fff" stroke-width="1.100"/></svg>
            <svg class="tray-ic" width="12" height="16" viewBox="0 0 12 16"><path d="M1 5h7v6H1zM8 7.500l3-2v5l-3-2zM2 2.500a5 5 0 0 1 5 0M2 13.500a5 5 0 0 0 5 0" fill="none" stroke="#fff"/></svg>
            <svg class="tray-ic" width="16" height="10" viewBox="0 0 16 10"><path fill="#e8e8e8" d="M3.500 10a3.300 3.300 0 0 1-.5-6.500A5 5 0 0 1 12 3a3.500 3.500 0 0 1 .5 7z"/></svg>
            <svg class="tray-ic" width="15" height="9" viewBox="0 0 15 9"><path d="M.500.500h12.500v8H.500z" fill="none" stroke="#fff"/><path d="M2.500 2.500h6v4h-6zM14 3h1v3h-1z" fill="#fff"/></svg>
            <svg class="tray-ic" width="16" height="14" viewBox="0 0 16 14"><path d="M.500 4.500h3L7 1v12L3.500 9.500h-3zM9.500 4.500a3 3 0 0 1 0 5M11.500 2.500a6 6 0 0 1 0 9" fill="none" stroke="#fff" stroke-width=".9"/></svg>
            <svg class="tray-ic" width="13" height="13" viewBox="0 0 13 13"><path d="M.500 12.500a12 12 0 0 1 12-12M3 12.500a9.500 9.500 0 0 1 9.500-9.500M5.500 12.500a7 7 0 0 1 7-7" fill="none" stroke="#c9c9c9" stroke-dasharray="1.400 .6"/><circle cx="10.500" cy="10.500" r="1.800" fill="#fff"/></svg>
            <div class="tray-lang">ENG<br>IN</div>
            <div class="tray-time">4:08 AM<br>8/23/2025</div>
            <div class="tray-note"><svg width="16" height="15" viewBox="0 0 16 15"><path fill="#fff" d="M0 0h16v12H7l-3 3v-3H0z"/><path d="M3 3.500h10M3 6h10M3 8.500h7" stroke="#1c1c1c"/></svg></div>
            <div class="tray-desk"></div>
        </div>
    </footer>
</body>
</html>
```

FILE: styles.css
```css
* {
    box-sizing: border-box;
}

html, body {
    margin: 0;
    padding: 0;
}

body {
    width: 1366px;
    height: 768px;
    overflow: hidden;
    font-family: "Noto Sans", "Liberation Sans", sans-serif;
    color: #212529;
    background: #ebecee;
}

.defs {
    display: block;
    height: 0;
}

svg {
    flex: none;
}

/* browser tabs */
.tabstrip {
    display: flex;
    height: 40px;
    padding: 6px 0 0 6px;
    background: #d3e3fd;
}

.tab-list-btn {
    display: flex;
    align-items: center;
    justify-content: center;
    width: 28px;
    height: 28px;
    margin-right: 2px;
    border-radius: 8px;
    background: #e3edfd;
}

.tab {
    position: relative;
    display: flex;
    align-items: center;
    width: 230px;
    height: 34px;
    margin: 0 4px;
    padding: 0 0 6px 8px;
    font-size: 12px;
    color: #474a4f;
}

.tab--active {
    border-radius: 8px 8px 0 0;
    background: #fff;
    color: #1f1f1f;
}

.tab--sep::after {
    content: "";
    position: absolute;
    right: -4px;
    top: 6px;
    width: 1px;
    height: 20px;
    background: #a8c7fa;
}

.tab-icon {
    width: 16px;
    height: 16px;
    margin-right: 8px;
}

.tab-title {
    width: 174px;
    overflow: hidden;
    white-space: nowrap;
    letter-spacing: -0.32px;
}

.tab-title--fade {
    width: 167px;
    margin-right: 7px;
    color: #52555a;
}

.tab-close {
    width: 9px;
    height: 9px;
    margin-left: 6px;
    color: #474a4f;
}

.tab-close--dark {
    color: #1f1f1f;
}

.tab-plus {
    display: flex;
    align-items: center;
    width: 24px;
    height: 28px;
    margin-left: 12px;
}

.win-btns {
    display: flex;
    align-items: center;
    height: 28px;
    margin-left: auto;
}

/* toolbar */
.toolbar {
    display: flex;
    align-items: center;
    height: 40px;
    padding-top: 6px;
    border-radius: 12px 12px 0 0;
    background: #fff;
}

.nav-btn {
    display: flex;
    justify-content: center;
    width: 36px;
}

.nav-btn--first {
    margin-left: 4px;
}

.omnibox {
    display: flex;
    align-items: center;
    width: 1108px;
    height: 34px;
    margin-left: 8px;
    padding-left: 5px;
    border-radius: 17px;
    background: #e9eff8;
}

.site-btn {
    display: flex;
    align-items: center;
    justify-content: center;
    width: 24px;
    height: 24px;
    border-radius: 50%;
    background: #fff;
}

.omni-url {
    margin-left: 8px;
    font-size: 14px;
    letter-spacing: -0.3px;
    color: #1f1f1f;
}

.omni-icon {
    margin-left: auto;
}

.omni-icon + .omni-icon {
    margin: 0 16px 0 15px;
}

.ext-icon {
    margin-left: 19px;
}

.bar-sep {
    width: 1px;
    height: 20px;
    margin-left: 18px;
    background: #d3e3fd;
}

.chrome-avatar {
    display: flex;
    align-items: center;
    justify-content: center;
    width: 20px;
    height: 20px;
    margin-left: 17px;
    border-radius: 50%;
    background: #2d6a1f;
    color: #fff;
    font-size: 10px;
}

.chrome-menu {
    margin-left: 23px;
    color: #474a4f;
}

/* bookmarks */
.bookmarks {
    display: flex;
    align-items: center;
    height: 41px;
    border-bottom: 1px solid #d9d9d9;
    padding: 0 0 1px 12px;
    background: #fff;
    font-size: 12px;
    letter-spacing: -0.32px;
    color: #474a4f;
}

.bm-sep {
    width: 1px;
    height: 20px;
    margin: 0 14px 0 16px;
    background: #d3e3fd;
}

.bm-sep--right {
    margin: 0 0 0 auto;
}

.bm {
    display: flex;
    align-items: center;
    flex: none;
    white-space: nowrap;
}

.bm svg {
    width: 16px;
    height: 16px;
    margin-right: 6px;
}

.bm--yt { width: 85px; }
.bm--maps { width: 68px; }
.bm--news { width: 67px; }
.bm--tr { width: 86px; }
.bm--ws { width: 93px; }
.bm--all { margin: 0 14px 0 16px; }
.bm--all svg { margin-right: 8px; }

/* ide */
.ide {
    height: 607px;
    background: #ebecee;
}

.ide-top {
    display: flex;
    align-items: center;
    height: 48px;
    font-size: 14px;
    color: #2a2d33;
}

.home {
    margin-left: 15px;
}

.proj-icon {
    display: flex;
    align-items: center;
    justify-content: center;
    width: 19px;
    height: 19px;
    margin-left: 19px;
    border-radius: 4px;
    background: #fff;
}

.proj-name {
    width: 103px;
    margin-left: 6px;
    white-space: nowrap;
    letter-spacing: -0.15px;
}

.proj-pill {
    width: 49px;
    height: 8px;
    border: 1px solid #d3d5d9;
    border-radius: 4px;
    background: #fff;
}

.upgrade {
    display: flex;
    align-items: center;
    gap: 8px;
    width: 95px;
    height: 32px;
    margin-left: 11px;
    padding-left: 9px;
    border-radius: 4px;
    background: #66b2ff;
    color: #0e1525;
    letter-spacing: -0.45px;
}

.stop {
    display: flex;
    align-items: center;
    gap: 7px;
    width: 68px;
    height: 32px;
    margin-left: 300px;
    padding-left: 11px;
    border-radius: 4px;
    background: #e1e2e5;
    color: #4a4f57;
}

.stop-square {
    width: 11px;
    height: 11px;
    border-radius: 2px;
    background: #3b3f47;
}

.stop-caret {
    margin-left: 4px;
}

.search-ic {
    margin-left: 341px;
}

.top-btn {
    display: flex;
    align-items: center;
    height: 32px;
    padding-left: 8px;
    border-radius: 4px;
    background: #fff;
    letter-spacing: -0.15px;
}

.top-btn--invite {
    gap: 6px;
    width: 78px;
    margin-left: 14px;
}

.top-btn--deploy {
    gap: 8px;
    width: 86px;
    margin-left: 6px;
    padding-left: 10px;
}

.bell {
    margin-left: 14px;
}

.user-avatar {
    display: flex;
    align-items: center;
    justify-content: center;
    width: 24px;
    height: 24px;
    margin-left: 23px;
    border: 1px solid #c2c4c8;
    border-radius: 50%;
    background: #d0d1d3;
    font-size: 9px;
    color: #555;
}

.user-caret {
    margin-left: 4px;
}

.ide-main {
    display: flex;
    height: 559px;
}

/* left rail */
.rail {
    display: flex;
    flex-direction: column;
    align-items: stretch;
    width: 48px;
    height: 551px;
}

.rail-files {
    display: flex;
    align-items: center;
    justify-content: center;
    width: 32px;
    height: 32px;
    margin-left: 8px;
    border: 1px solid #d0d2d6;
    border-radius: 4px;
    background: #f5f6f7;
}

.rail-item {
    position: relative;
    display: flex;
    align-items: center;
    justify-content: center;
    height: 36px;
}

.rail-item--first {
    margin-top: 117px;
}

.rail-item--deploy {
    margin-top: -1px;
    color: #2d7a3f;
}

.rail-item--grid {
    margin-top: -1px;
}

.rail-dot {
    position: absolute;
    left: 10px;
    top: 17px;
    width: 3px;
    height: 3px;
    border-radius: 50%;
    background: #5d6168;
}

.rail-sep {
    height: 1px;
    margin: 6px 12px;
    background: #d3d5d9;
}

.rail-bottom {
    margin-top: auto;
}

.rail-star {
    display: flex;
    align-items: center;
    justify-content: center;
    height: 34px;
    color: #0e1525;
}

.rail-help {
    height: 32px;
    text-align: center;
    line-height: 32px;
    font-size: 16px;
    color: #3a3d43;
}

/* file panel */
.files {
    display: flex;
    flex-direction: column;
    width: 180px;
    height: 551px;
    border-radius: 6px;
    background: #f5f6f7;
    overflow: hidden;
}

.files-head {
    display: flex;
    align-items: center;
    gap: 8px;
    height: 35px;
    margin-bottom: 2px;
    padding: 0 15px 0 7px;
}

.files-title {
    font-size: 14px;
    color: #2a2d33;
}

.files-kebab {
    margin-left: auto;
    color: #4a4f57;
}

.files-search {
    height: 28px;
    margin: 0 9px;
    padding-left: 8px;
    border-radius: 4px;
    background: #fbfbfc;
    font-size: 11.500px;
    line-height: 29px;
    color: #6f747b;
}

.files-body {
    display: flex;
    height: 446px;
    overflow: hidden;
}

.tree {
    width: 164px;
    margin-top: -19px;
    font-size: 13px;
    letter-spacing: -0.2px;
    color: #4e5259;
}

.row {
    display: flex;
    align-items: center;
    height: 24px;
    padding-left: 8px;
    white-space: nowrap;
}

.row svg {
    width: 16px;
    height: 16px;
    margin-right: 6px;
}

.tree-label {
    height: 33px;
    margin: 5px 6px 0 7px;
    padding-top: 10px;
    border-top: 1px dashed #c9ccd1;
    font-size: 11.500px;
    letter-spacing: 0;
    color: #5d6168;
}

.tree-scroll {
    position: relative;
    width: 16px;
    background: #fafbfb;
}

.sb-up, .sb-down {
    position: absolute;
    left: 3px;
    width: 0;
    height: 0;
    border-left: 5px solid transparent;
    border-right: 5px solid transparent;
}

.sb-up {
    top: 5px;
    border-bottom: 5px solid #d6d8da;
}

.sb-down {
    bottom: 4px;
    border-top: 5px solid #d6d8da;
}

.sb-up--dark {
    border-bottom-color: #7d7d7d;
}

.sb-down--dark {
    border-top-color: #7d7d7d;
}

.sb-thumb {
    display: block;
    width: 9px;
    height: 199px;
    margin: 232px 0 0 3px;
    border-radius: 5px;
    background: #e1e3e5;
}

.files-actions {
    display: flex;
    gap: 4px;
    padding: 7px 5px 0;
}

.file-btn {
    display: flex;
    align-items: center;
    justify-content: center;
    gap: 5px;
    width: 83px;
    height: 28px;
    border: 1px solid #d0d2d6;
    border-radius: 4px;
    font-size: 12px;
    color: #2a2d33;
}

.handle {
    width: 6px;
    height: 25px;
    margin: 264px -1px 0 1px;
    border-left: 2px solid #d0d2d6;
}

/* work area */
.work {
    position: relative;
    display: flex;
    flex-direction: column;
    gap: 6px;
    width: 1124px;
    height: 551px;
}

.pane {
    height: 513px;
    border-radius: 6px 6px 4px 4px;
    overflow: hidden;
    background: #fff;
}

.pane-tabs {
    display: flex;
    align-items: stretch;
    height: 32px;
    border-bottom: 1px solid #d5d7da;
    background: #f5f6f7;
    font-size: 13px;
    letter-spacing: -0.15px;
}

.ptab {
    display: flex;
    align-items: center;
    gap: 7px;
    padding: 0 0 1px 7px;
    border-right: 1px solid #d5d7da;
    color: #9a9ea3;
    white-space: nowrap;
}

.ptab svg {
    opacity: .55;
}

.ptab--md {
    width: 111px;
    gap: 5px;
}

.ptab--env {
    width: 81px;
    padding-left: 4px;
    gap: 8px;
}

.ptab--active {
    width: 106px;
    margin-bottom: -1px;
    border-top: 2px solid #0f87ff;
    background: #fff;
    color: #2a2d33;
}

.ptab--active svg {
    opacity: 1;
}

.ptab--agent {
    width: 111px;
    gap: 8px;
    padding-left: 8px;
}

.ptab-plus {
    width: 40px;
    padding-left: 11px;
    font-size: 18px;
    line-height: 30px;
    color: #4a4f57;
}

.pane-kebab {
    align-self: center;
    margin-left: auto;
    margin-right: 14px;
    color: #4a4f57;
}

.addr {
    display: flex;
    align-items: center;
    height: 36px;
    border-bottom: 1px solid #d5d7da;
    padding-left: 10px;
    background: #fff;
}

.addr-btn--gap {
    margin-left: 16px;
}

.addr-field {
    display: flex;
    align-items: center;
    width: 952px;
    height: 24px;
    margin-left: 7px;
    padding-left: 4px;
    border-radius: 4px;
    background: #f0f1f3;
    font-size: 12px;
    letter-spacing: -0.05px;
}

.addr-host {
    margin-left: 2px;
    color: #70757c;
}

.addr-path {
    color: #2a2d33;
}

.addr-tool--a { margin-left: 8px; }
.addr-tool--b { margin-left: 10px; }
.addr-tool--c { margin-left: 12px; }

/* previewed page */
.preview {
    display: flex;
    height: 445px;
    overflow: hidden;
}

.pv-side {
    width: 185px;
    flex: none;
    border-right: 1px solid #dee2e6;
    background: #fff;
    color: #343a40;
}

.pv-link {
    padding-left: 28px;
    font-size: 15.500px;
    font-weight: 500;
    line-height: 26px;
}

.pv-link:first-child {
    margin-top: 2px;
}

.pv-link--well {
    display: flex;
    align-items: center;
    gap: 8px;
    margin-top: 28px;
}

.qa {
    width: 161px;
    height: 400px;
    margin: 18px 0 0 12px;
    box-shadow: 0 0 4px rgba(0, 0, 0, .08);
}

.qa-head {
    height: 50px;
    padding: 10px 0 0 16px;
    border-bottom: 1px solid #e3e5e8;
    font-size: 15px;
    font-weight: 600;
    line-height: 26px;
    color: #4caf50;
}

.qa-body {
    padding: 16.400px 16px;
}

.qa-item {
    padding: 8px 16px;
    border-bottom: 1px solid #dee2e6;
    font-size: 15.500px;
    line-height: 25.600px;
    color: #212529;
    letter-spacing: -0.3px;
}

.qa-item:last-child {
    border-bottom: 0;
}

.qa-blank {
    display: inline-block;
    width: 8px;
}

.qa-ic {
    margin-right: 8px;
    vertical-align: -1px;
}

.pv-main {
    flex: 1;
    min-width: 0;
    padding-left: 24px;
    background: #f8f9fb;
}

.card {
    width: 876px;
    height: 347px;
    border-radius: 8px 8px 0 0;
    background: #f3f3f3;
    box-shadow: 0 2px 4px rgba(0, 0, 0, .12);
    overflow: hidden;
}

.card-head {
    height: 41px;
    padding-left: 16px;
    background: #4caf50;
    color: #fff;
    font-size: 19px;
    font-weight: 600;
    line-height: 43px;
    letter-spacing: -0.25px;
}

.hist {
    width: 876px;
    table-layout: fixed;
    border-collapse: collapse;
    font-size: 15.500px;
    line-height: 25.600px;
}

.hist th {
    height: 43px;
    padding: 0 8px;
    background: #212529;
    color: #fff;
    font-size: 15px;
    font-weight: 700;
    text-align: left;
    letter-spacing: 0;
}

.hist td {
    padding: 8px;
    vertical-align: top;
}

.col-pet { width: 47px; }
.col-date { width: 114px; }
.col-sym { width: 140px; }
.col-diag { width: 253px; }
.col-rec { width: 230px; }

.hist td.plain {
    padding-top: 10px;
    letter-spacing: -0.35px;
}

.hist td.plain--date {
    letter-spacing: -0.1px;
}

.alert {
    width: 200px;
    margin-bottom: 4px;
    padding: 4px 4px 4px 8px;
    border-left: 4px solid #ff9800;
    border-radius: 8px;
    background: #f5e9dc;
    color: #e65100;
    font-size: 13.500px;
    line-height: 22.400px;
    letter-spacing: -0.2px;
}

.alert-ic {
    margin-right: 7px;
    vertical-align: -1px;
}

.alert-ic--line {
    margin-right: 4px;
}

.diag {
    margin-bottom: 4px;
    letter-spacing: -0.35px;
}

.diag--first {
    margin-top: 5px;
}

.hist td.rec {
    padding: 9px 36px 8px 8px;
    font-size: 12.800px;
    line-height: 17.600px;
    letter-spacing: -0.2px;
    color: #6c757d;
}

.badge {
    display: block;
    width: 62px;
    height: 24px;
    margin-top: 2px;
    border-radius: 4px;
    background: #8bc34a;
    color: #fff;
    font-size: 12px;
    font-weight: 700;
    line-height: 24px;
    text-align: center;
}

.pv-scroll {
    position: relative;
    flex: none;
    width: 16px;
    background: #fdfdfd;
}

.pv-thumb {
    display: block;
    width: 10px;
    height: 211px;
    margin: 212px 0 0 4px;
    border-radius: 5px;
    background: #8a8a8a;
}

/* console */
.console {
    display: flex;
    height: 32px;
    border-bottom: 1px solid #d5d7da;
    border-radius: 4px 4px 0 0;
    overflow: hidden;
    background: #f5f6f7;
    font-size: 13px;
    letter-spacing: -0.2px;
}

.ctab {
    display: flex;
    align-items: center;
    gap: 6px;
    padding: 0 0 1px 8px;
    border-right: 1px solid #d5d7da;
}

.ctab--active {
    width: 105px;
    background: #fff;
    color: #2a2d33;
}

.ctab--shell {
    width: 87px;
    padding-left: 7px;
    background: #ecedef;
    color: #9a9ea3;
}

.pane-caret {
    position: absolute;
    left: 557px;
    top: 512px;
}

/* windows taskbar */
.taskbar {
    display: flex;
    align-items: stretch;
    height: 40px;
    background: #1c1c1c;
    color: #fff;
}

.start {
    display: flex;
    align-items: center;
    justify-content: center;
    width: 48px;
}

.tb-search {
    display: flex;
    align-items: center;
    width: 287px;
    padding-left: 12px;
    border-top: 1px solid #c9c9c9;
    background: #f3f3f3;
    color: #222;
    font-size: 14.500px;
}

.tb-search-text {
    margin: 0 0 2px 10px;
    letter-spacing: -0.25px;
}

.tb-sparkle {
    margin-left: auto;
    margin-right: 9px;
}

.tb-view {
    display: flex;
    align-items: center;
    justify-content: center;
    width: 50px;
}

.tb-app {
    position: relative;
    display: flex;
    align-items: center;
    justify-content: center;
    width: 49.500px;
}

.tb-app--open::after,
.tb-app--active::after {
    content: "";
    position: absolute;
    left: 5px;
    right: 5px;
    bottom: 0;
    height: 2px;
    background: #76b9ed;
}

.tb-app--active {
    background: #4a4a4a;
}

.tb-app--active::after {
    left: 0;
    right: 2px;
}

.chrome-badge {
    position: absolute;
    left: 26px;
    top: 21px;
    width: 15px;
    height: 15px;
    border-radius: 50%;
    background: #2d6a1f;
    font-size: 8px;
    line-height: 15px;
    text-align: center;
}

.tray {
    display: flex;
    align-items: center;
    margin-left: auto;
}

.tray-ic {
    width: 24px;
    padding: 0 4px;
    height: 16px;
}

.tray-lang {
    width: 34px;
    font-size: 12px;
    line-height: 18px;
    text-align: center;
}

.tray-time {
    width: 66px;
    font-size: 12px;
    line-height: 18px;
    text-align: center;
}

.tray-note {
    display: flex;
    justify-content: center;
    width: 38px;
}

.tray-desk {
    width: 14px;
    height: 40px;
    border-left: 1px solid #6a6a6a;
}
```
